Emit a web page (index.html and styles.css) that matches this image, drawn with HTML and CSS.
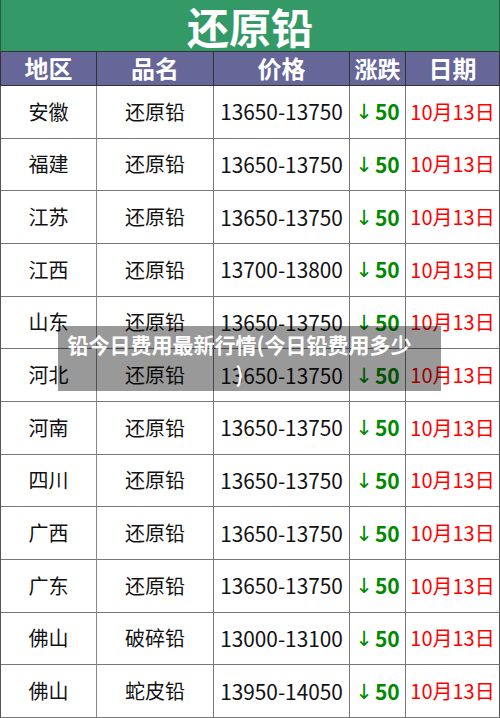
FILE: index.html
```html
<!DOCTYPE html>
<html lang="zh-CN">
<head>
<meta charset="utf-8">
<title>还原铅</title>
<link rel="stylesheet" href="styles.css">
</head>
<body>
<div class="page">
  <div class="title">还原铅</div>
  <div class="head">
    <div>地区</div><div>品名</div><div>价格</div><div>涨跌</div><div>日期</div>
  </div>
  <div class="body">
    <div>安徽</div><div>还原铅</div><div class="price">13650-13750</div><div class="chg"><span class="arr">↓</span>50</div><div class="date">10月13日</div>
    <div>福建</div><div>还原铅</div><div class="price">13650-13750</div><div class="chg"><span class="arr">↓</span>50</div><div class="date">10月13日</div>
    <div>江苏</div><div>还原铅</div><div class="price">13650-13750</div><div class="chg"><span class="arr">↓</span>50</div><div class="date">10月13日</div>
    <div>江西</div><div>还原铅</div><div class="price">13700-13800</div><div class="chg"><span class="arr">↓</span>50</div><div class="date">10月13日</div>
    <div>山东</div><div>还原铅</div><div class="price">13650-13750</div><div class="chg"><span class="arr">↓</span>50</div><div class="date">10月13日</div>
    <div>河北</div><div>还原铅</div><div class="price">13650-13750</div><div class="chg"><span class="arr">↓</span>50</div><div class="date">10月13日</div>
    <div>河南</div><div>还原铅</div><div class="price">13650-13750</div><div class="chg"><span class="arr">↓</span>50</div><div class="date">10月13日</div>
    <div>四川</div><div>还原铅</div><div class="price">13650-13750</div><div class="chg"><span class="arr">↓</span>50</div><div class="date">10月13日</div>
    <div>广西</div><div>还原铅</div><div class="price">13650-13750</div><div class="chg"><span class="arr">↓</span>50</div><div class="date">10月13日</div>
    <div>广东</div><div>还原铅</div><div class="price">13650-13750</div><div class="chg"><span class="arr">↓</span>50</div><div class="date">10月13日</div>
    <div>佛山</div><div>破碎铅</div><div class="price">13000-13100</div><div class="chg"><span class="arr">↓</span>50</div><div class="date">10月13日</div>
    <div>佛山</div><div>蛇皮铅</div><div class="price">13950-14050</div><div class="chg"><span class="arr">↓</span>50</div><div class="date">10月13日</div>
  </div>
  <div class="caption">铅今日费用最新行情(今日铅费用多少<br>)</div>
</div>
</body>
</html>
```

FILE: styles.css
```css
* { box-sizing: border-box; }
html, body { margin: 0; padding: 0; background: #fff; }
body {
  font-family: "Noto Sans CJK SC", "Noto Sans", sans-serif;
  color: #111;
}
.page {
  position: relative;
  width: 500px;
  height: 718px;
  display: flex;
  flex-direction: column;
  overflow: hidden;
}
.title {
  height: 52px;
  flex: none;
  background: #339966;
  color: #fff;
  font-weight: 700;
  font-size: 42px;
  line-height: 52px;
  text-align: center;
  border-left: 1px solid #2a5a40;
  border-right: 1px solid #2a5a40;
  border-bottom: 1px solid #333;
}
.head {
  height: 34px;
  flex: none;
  display: grid;
  grid-template-columns: 96px 117px 136px 56px 1fr;
  background: #666699;
  color: #fff;
  font-weight: 700;
  font-size: 24px;
  border-left: 1px solid #333;
  border-bottom: 1px solid #333;
}
.head > div {
  display: flex;
  align-items: center;
  justify-content: center;
  border-right: 1px solid #333;
  line-height: 1;
  padding-bottom: 1px;
}
.head > div:nth-child(4) { font-size: 23px; }
.body {
  flex: 1;
  display: grid;
  grid-template-columns: 96px 117px 136px 56px 1fr;
  grid-auto-rows: 1fr;
  border-left: 1px solid #555;
  font-size: 20px;
}
.body > div {
  display: flex;
  align-items: center;
  justify-content: center;
  border-right: 1px solid #777;
  border-bottom: 1px solid #777;
  white-space: nowrap;
  line-height: 1;
}
.body > div:nth-child(5n+1) { border-right-color: #888; }
.body > div:nth-child(5n) { border-right-color: #555; }
.price { font-size: 20.8px; }
.chg {
  color: #008a00;
  font-weight: 700;
  font-size: 21px;
}
.arr {
  font-family: "Noto Sans", "DejaVu Sans", sans-serif;
  font-weight: 400;
  margin-right: 2px;
}
.date { color: #ff0000; }
.caption {
  position: absolute;
  left: 58px;
  top: 326px;
  width: 383px;
  height: 65px;
  background: rgba(0, 0, 0, 0.4);
  color: #fff;
  font-weight: 700;
  font-size: 21px;
  line-height: 30px;
  padding: 3px 20px 0 0;
  text-align: center;
  white-space: nowrap;
}
```
